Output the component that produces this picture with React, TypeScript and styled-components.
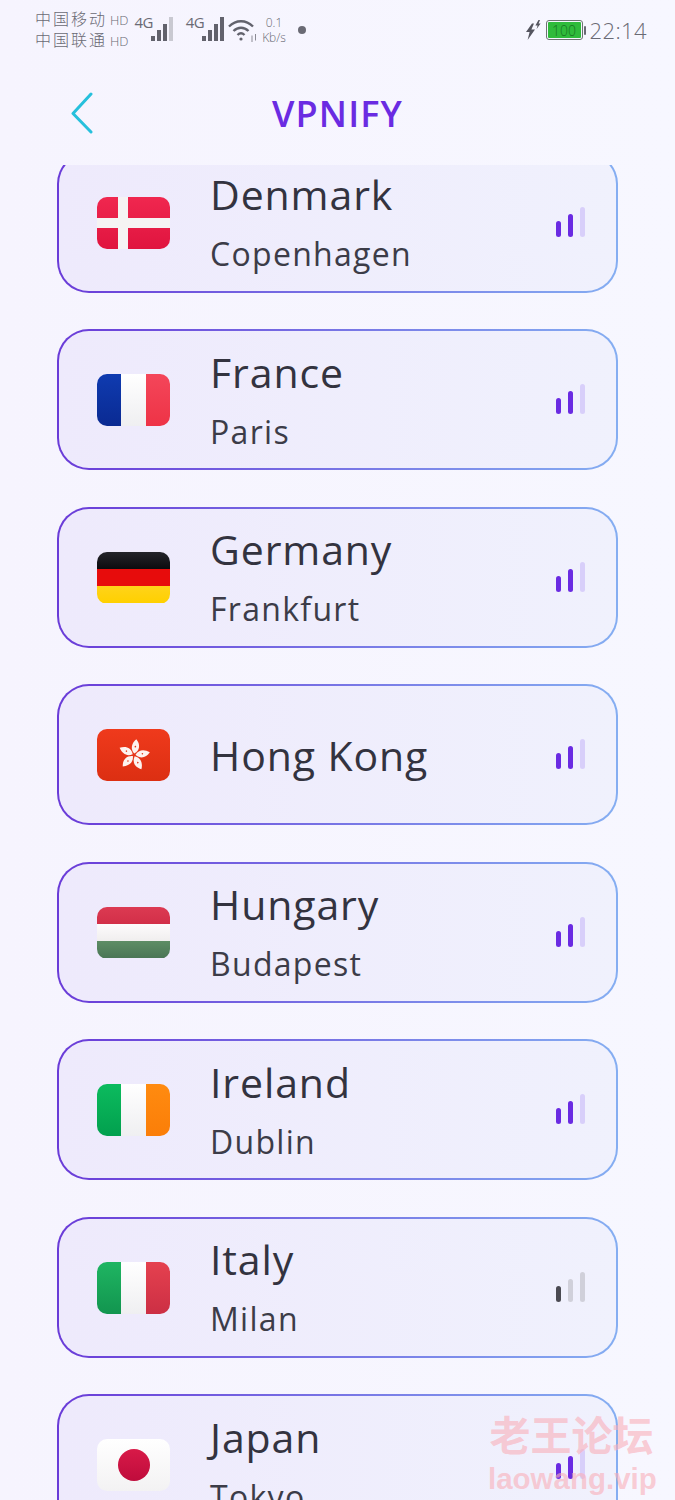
import React from "react";
import styled, { createGlobalStyle } from "styled-components";

const GlobalStyle = createGlobalStyle`
  html, body {
    margin: 0;
    padding: 0;
    background: #f6f5fe;
  }
`;

const Page = styled.div`
  position: relative;
  width: 675px;
  height: 1500px;
  overflow: hidden;
  background: linear-gradient(90deg, #f6f4fe 0%, #f7f7ff 100%);
  font-family: "Open Sans", "Noto Sans", sans-serif;
`;

const StatusBar = styled.div`
  height: 60px;
  box-sizing: border-box;
  padding: 0 28px 0 35px;
  display: flex;
  justify-content: space-between;
  align-items: center;
  color: #6a6a74;
`;

const StatusGroup = styled.div`
  display: flex;
  align-items: center;
`;

const Carriers = styled.div`
  display: flex;
  flex-direction: column;
  gap: 2px;
  margin-right: 6px;
`;

const Carrier = styled.div`
  font-family: "Noto Sans CJK SC", "Open Sans", sans-serif;
  font-weight: 300;
  font-size: 16px;
  line-height: 17px;
  letter-spacing: 2px;
  white-space: nowrap;
  span {
    font-family: "Open Sans", sans-serif;
    font-size: 13px;
    letter-spacing: 0;
    margin-left: 3px;
  }
`;

const NetLabel = styled.span<{ $gap?: number }>`
  font-size: 15px;
  line-height: 16px;
  letter-spacing: -0.6px;
  align-self: flex-start;
  margin: 0 -2px 0 ${(props) => props.$gap || 0}px;
  padding-top: 4px;
`;

const Wifi = styled.svg`
  margin-left: 1px;
`;

const Speed = styled.div`
  font-size: 12px;
  line-height: 15px;
  font-weight: 300;
  text-align: center;
  margin-left: 3px;
`;

const Dot = styled.div`
  width: 8px;
  height: 8px;
  border-radius: 50%;
  background: #6a6a74;
  margin-left: 12px;
`;

const Battery = styled.div`
  width: 37px;
  height: 20px;
  box-sizing: border-box;
  margin-left: 5px;
  border: 1px solid #6c7470;
  border-radius: 3px;
  background: #2fbb3b;
  background-clip: content-box;
  padding: 1px;
  color: #15761f;
  font-size: 14px;
  font-weight: 300;
  line-height: 17px;
  text-align: center;
`;

const BatteryCap = styled.div`
  width: 2px;
  height: 9px;
  margin: 0 4px 0 1px;
  border-radius: 1px;
  background: #6a6a74;
`;

const Clock = styled.div`
  font-size: 22px;
  font-weight: 300;
  letter-spacing: 0.4px;
  line-height: 24px;
`;

const Nav = styled.div`
  height: 105px;
  box-sizing: border-box;
  padding: 3px 0 0;
  display: grid;
  grid-template-columns: 1fr auto 1fr;
  align-items: center;
`;

const BackButton = styled.div`
  padding-left: 70px;
  display: flex;
  align-items: center;
`;

const Title = styled.div`
  color: #6a2be2;
  font-size: 36px;
  font-weight: 600;
  letter-spacing: 1.15px;
  line-height: 44px;
`;

const Viewport = styled.div`
  height: 1335px;
  overflow: hidden;
`;

const List = styled.div`
  margin-top: -13.5px;
  padding: 0 57px;
  display: flex;
  flex-direction: column;
  gap: 36.5px;
`;

const Card = styled.div`
  height: 141px;
  box-sizing: border-box;
  flex: none;
  padding: 0 31px 0 38px;
  display: flex;
  align-items: center;
  border: 2px solid transparent;
  border-radius: 32px;
  background:
    linear-gradient(90deg, #eeeafc 0%, #f0f1fd 100%) padding-box,
    linear-gradient(90deg, #6a3bd8 0%, #85aef2 100%) border-box;
`;

const FlagBox = styled.div<{ $direction?: string; $bg?: string }>`
  width: 73px;
  height: 52px;
  flex: none;
  margin-top: 1px;
  overflow: hidden;
  display: flex;
  flex-direction: ${(props) => props.$direction || "row"};
  align-items: stretch;
  justify-content: center;
  border-radius: 10px;
  background: ${(props) => props.$bg || "none"};
`;

const Stripe = styled.div<{ $bg: string }>`
  flex: 1;
  background: ${(props) => props.$bg};
`;

const Sun = styled.div`
  align-self: center;
  width: 32px;
  height: 32px;
  border-radius: 50%;
  background: linear-gradient(180deg, #d81a48 0%, #bf0c3c 100%);
`;

const FlowerSvg = styled.svg`
  align-self: center;
`;

const Names = styled.div`
  flex: 1;
  margin-left: 40px;
  display: flex;
  flex-direction: column;
  gap: 14px;
  color: #33333f;
`;

const Country = styled.div`
  font-size: 41px;
  line-height: 50px;
  letter-spacing: 0.9px;
`;

const City = styled.div`
  font-size: 32px;
  line-height: 42px;
  letter-spacing: 1.3px;
  color: #3c3c48;
`;

const Bars = styled.div`
  display: flex;
  align-items: flex-end;
  gap: 7px;
  margin-top: -1px;
`;

const Bar = styled.div<{ $height: number; $color: string }>`
  width: 5px;
  height: ${(props) => props.$height}px;
  border-radius: 3px;
  background: ${(props) => props.$color};
`;

const Watermark = styled.div`
  position: absolute;
  right: 20px;
  bottom: 6px;
  width: 167px;
  color: rgba(250, 175, 185, 0.62);
  font-weight: 700;
  text-align: center;
  pointer-events: none;
`;

const WatermarkCn = styled.div`
  font-family: "Noto Sans CJK SC", sans-serif;
  font-size: 41px;
  line-height: 48px;
  margin-bottom: 7px;
`;

const WatermarkEn = styled.div`
  font-family: "Liberation Sans", sans-serif;
  font-size: 29.5px;
  line-height: 30px;
  white-space: nowrap;
`;

function SignalIcon({ full }: { full: boolean }) {
  return (
    <svg width="24" height="26" viewBox="0 0 24 26">
      <rect x="0" y="19" width="4" height="5" fill="#62626c" />
      <rect x="6" y="13" width="4" height="11" fill="#62626c" />
      <rect x="12" y="7" width="4" height="17" fill="#62626c" />
      <rect x="18" y="0" width="4" height="24" fill={full ? "#62626c" : "#c9c9d1"} />
    </svg>
  );
}

function WifiIcon() {
  return (
    <Wifi width="32" height="26" viewBox="0 0 32 26" fill="none" stroke="#62626c" strokeWidth="2.4">
      <path d="M2 9.5C9 2.5 19 2.5 26 9.5" />
      <path d="M6.5 14C11 9.6 17 9.6 21.5 14" />
      <path d="M10.5 18C12.8 15.8 15.2 15.8 17.5 18" />
      <circle cx="14" cy="22" r="1.6" fill="#62626c" stroke="none" />
      <path d="M25 18.5V25M28.5 17V23.5" strokeWidth="1" stroke="#8a8a93" />
    </Wifi>
  );
}

function ChargeIcon() {
  return (
    <svg width="16" height="22" viewBox="0 0 16 22" fill="#55555f">
      <path d="M7 4.5 1 13h3.6L2.6 21 10 10.5H6.4L9 4.5Z" />
      <path d="M13.5 1 10.4 6.5h2.2L11.6 10 15.6 4.6h-2L15 1Z" />
    </svg>
  );
}

function HongKongFlower() {
  const petals = [0, 72, 144, 216, 288];
  return (
    <FlowerSvg width="34" height="34" viewBox="-17 -17 34 34">
      {petals.map((angle) => (
        <g key={angle} transform={`rotate(${angle + 12})`}>
          <path d="M0 -1.5C-5 -5 -5 -11 -1 -16C4 -12 5 -6 0 -1.5Z" fill="#fdf3ef" />
          <circle cx="-0.4" cy="-8.5" r="0.8" fill="#e23a1c" />
        </g>
      ))}
    </FlowerSvg>
  );
}

const denmarkBg = `
  linear-gradient(90deg, transparent 21px, #f5f3f3 21px, #f5f3f3 31px, transparent 31px),
  linear-gradient(180deg, transparent 21px, #f5f3f3 21px, #f5f3f3 31px, transparent 31px),
  linear-gradient(180deg, #f0274f 0%, #e0143f 100%)
`;

const white = "linear-gradient(180deg, #ffffff 0%, #efeff1 100%)";

const flags: Record<string, React.ReactNode> = {
  dk: <FlagBox $bg={denmarkBg} />,
  fr: (
    <FlagBox>
      <Stripe $bg="linear-gradient(180deg, #0f3bb0 0%, #0a2a92 100%)" />
      <Stripe $bg={white} />
      <Stripe $bg="linear-gradient(180deg, #f4465a 0%, #ee3346 100%)" />
    </FlagBox>
  ),
  de: (
    <FlagBox $direction="column">
      <Stripe $bg="linear-gradient(180deg, #24242a 0%, #0b0b0e 100%)" />
      <Stripe $bg="#e70c0c" />
      <Stripe $bg="linear-gradient(180deg, #ffd31a 0%, #ffd000 100%)" />
    </FlagBox>
  ),
  hk: (
    <FlagBox $bg="linear-gradient(180deg, #ef3a1c 0%, #dc2f12 100%)">
      <HongKongFlower />
    </FlagBox>
  ),
  hu: (
    <FlagBox $direction="column">
      <Stripe $bg="linear-gradient(180deg, #dc3a52 0%, #d22f48 100%)" />
      <Stripe $bg="linear-gradient(180deg, #fdfbfc 0%, #f0eeee 100%)" />
      <Stripe $bg="linear-gradient(180deg, #5d8d65 0%, #4a7655 100%)" />
    </FlagBox>
  ),
  ie: (
    <FlagBox>
      <Stripe $bg="linear-gradient(180deg, #0cbb5e 0%, #02a04e 100%)" />
      <Stripe $bg={white} />
      <Stripe $bg="linear-gradient(180deg, #ff8b10 0%, #fb7e08 100%)" />
    </FlagBox>
  ),
  it: (
    <FlagBox>
      <Stripe $bg="linear-gradient(180deg, #1fb562 0%, #12954f 100%)" />
      <Stripe $bg={white} />
      <Stripe $bg="linear-gradient(180deg, #e5414f 0%, #cc2f44 100%)" />
    </FlagBox>
  ),
  jp: (
    <FlagBox $bg="linear-gradient(180deg, #ffffff 0%, #f3f2f3 100%)">
      <Sun />
    </FlagBox>
  ),
};

const countries = [
  { name: "Denmark", city: "Copenhagen", flag: "dk", strength: 2 },
  { name: "France", city: "Paris", flag: "fr", strength: 2 },
  { name: "Germany", city: "Frankfurt", flag: "de", strength: 2 },
  { name: "Hong Kong", city: "", flag: "hk", strength: 2 },
  { name: "Hungary", city: "Budapest", flag: "hu", strength: 2 },
  { name: "Ireland", city: "Dublin", flag: "ie", strength: 2 },
  { name: "Italy", city: "Milan", flag: "it", strength: 1 },
  { name: "Japan", city: "Tokyo", flag: "jp", strength: 2 },
];

const barHeights = [16, 23, 30];

function SignalBars({ strength }: { strength: number }) {
  const on = strength === 1 ? "#4a4a52" : "#6a2be2";
  const off = strength === 1 ? "#d0d0da" : "#d8cffa";
  return (
    <Bars>
      {barHeights.map((height, i) => (
        <Bar key={height} $height={height} $color={i < strength ? on : off} />
      ))}
    </Bars>
  );
}

export default function App() {
  return (
    <Page>
      <GlobalStyle />
      <StatusBar>
        <StatusGroup>
          <Carriers>
            <Carrier>
              中国移动<span>HD</span>
            </Carrier>
            <Carrier>
              中国联通<span>HD</span>
            </Carrier>
          </Carriers>
          <NetLabel>4G</NetLabel>
          <SignalIcon full={false} />
          <NetLabel $gap={11}>4G</NetLabel>
          <SignalIcon full />
          <WifiIcon />
          <Speed>
            0.1
            <br />
            Kb/s
          </Speed>
          <Dot />
        </StatusGroup>
        <StatusGroup>
          <ChargeIcon />
          <Battery>100</Battery>
          <BatteryCap />
          <Clock>22:14</Clock>
        </StatusGroup>
      </StatusBar>
      <Nav>
        <BackButton>
          <svg width="24" height="44" viewBox="0 0 24 44" fill="none">
            <path
              d="M21 2 3 21.5 21 40"
              stroke="#26c0dc"
              strokeWidth="3"
              strokeLinecap="round"
              strokeLinejoin="round"
            />
          </svg>
        </BackButton>
        <Title>VPNIFY</Title>
        <div />
      </Nav>
      <Viewport>
        <List>
          {countries.map((c) => (
            <Card key={c.name}>
              {flags[c.flag]}
              <Names>
                <Country>{c.name}</Country>
                {c.city && <City>{c.city}</City>}
              </Names>
              <SignalBars strength={c.strength} />
            </Card>
          ))}
        </List>
      </Viewport>
      <Watermark>
        <WatermarkCn>老王论坛</WatermarkCn>
        <WatermarkEn>laowang.vip</WatermarkEn>
      </Watermark>
    </Page>
  );
}
